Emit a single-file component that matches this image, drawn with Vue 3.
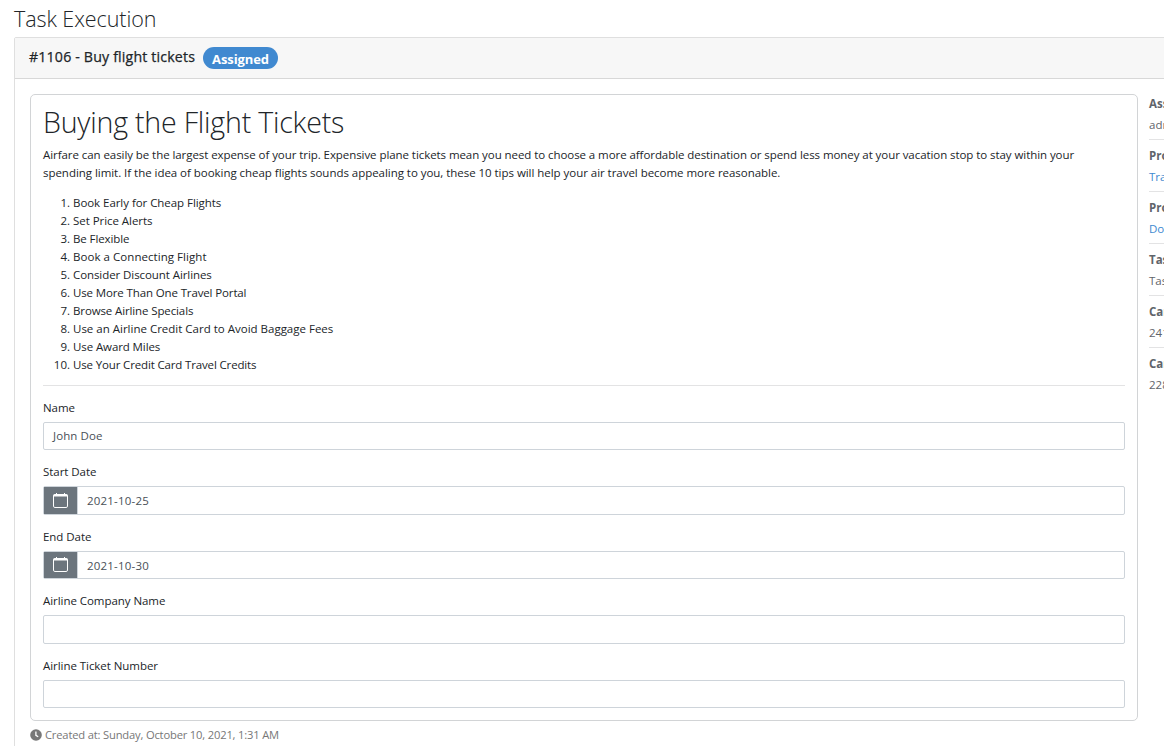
<script setup>
const tips = [
  { text: 'Book Early for Cheap Flights', spacing: -0.05 },
  { text: 'Set Price Alerts', spacing: -0.05 },
  { text: 'Be Flexible', spacing: -0.1 },
  { text: 'Book a Connecting Flight', spacing: 0.05 },
  { text: 'Consider Discount Airlines', spacing: -0.08 },
  { text: 'Use More Than One Travel Portal', spacing: -0.13 },
  { text: 'Browse Airline Specials', spacing: -0.12 },
  { text: 'Use an Airline Credit Card to Avoid Baggage Fees', spacing: 0 },
  { text: 'Use Award Miles', spacing: -0.1 },
  { text: 'Use Your Credit Card Travel Credits', spacing: -0.15 },
]
const fields = [
  { label: 'Name', value: 'John Doe' },
  { label: 'Start Date', value: '2021-10-25', date: true },
  { label: 'End Date', value: '2021-10-30', date: true },
  { label: 'Airline Company Name', value: '' },
  { label: 'Airline Ticket Number', value: '' },
]
const details = [
  { name: 'Assigned', value: 'admin' },
  { name: 'Process', value: 'Travel', link: true },
  { name: 'Process', value: 'Document', link: true },
  { name: 'Task', value: 'Task' },
  { name: 'Camunda', value: '241' },
  { name: 'Camunda', value: '228' },
]
</script>

<template>
  <main class="page">
    <h1 class="page-title">Task Execution</h1>
    <section class="card">
      <header class="card-header">
        <span class="task-name">#1106 - Buy flight tickets</span>
        <span class="badge">Assigned</span>
      </header>
      <div class="card-body">
        <div class="main">
          <div class="panel">
            <h2 class="panel-title">Buying the Flight Tickets</h2>
            <p class="intro">
              <span class="line">Airfare can easily be the largest expense of your trip. Expensive plane tickets mean you need to choose a more affordable destination or spend less money at your vacation stop to stay within your</span>
              <span class="line second">spending limit. If the idea of booking cheap flights sounds appealing to you, these 10 tips will help your air travel become more reasonable.</span>
            </p>
            <ol class="tips">
              <li v-for="(tip, i) in tips" :key="tip.text">
                <span class="num">{{ i + 1 }}.</span>
                <span :style="{ letterSpacing: tip.spacing + 'px' }">{{ tip.text }}</span>
              </li>
            </ol>
            <hr class="rule" />
            <div v-for="f in fields" :key="f.label" class="field">
              <div class="label">{{ f.label }}</div>
              <div class="control">
                <span v-if="f.date" class="addon">
                  <svg width="17" height="17" viewBox="0 0 17 17" fill="none" stroke="#fff">
                    <rect x="1.5" y="2.5" width="14" height="13" rx="1.4" stroke-width="1" />
                    <path d="M1.5 3.5h14" stroke-width="2" />
                    <path d="M4.5 1v2M12.5 1v2" stroke-width="1" />
                  </svg>
                </span>
                <span class="value" :class="{ dated: f.date }">{{ f.value }}</span>
              </div>
            </div>
          </div>
          <div class="created">
            <svg width="12" height="12" viewBox="0 0 12 12">
              <circle cx="6" cy="6" r="5.8" fill="#777" />
              <path d="M5.9 2.6v3.7l2.3 1.5" fill="none" stroke="#fff" stroke-width="1.3" />
            </svg>
            <span>Created at: Sunday, October 10, 2021, 1:31 AM</span>
          </div>
        </div>
        <aside class="side">
          <div v-for="(d, i) in details" :key="i" class="detail">
            <div class="name">{{ d.name }}</div>
            <div :class="{ link: d.link }">{{ d.value }}</div>
          </div>
        </aside>
      </div>
    </section>
  </main>
</template>

<style>
html, body { margin: 0; background: #fff; overflow: hidden; }
</style>

<style scoped>
* { box-sizing: border-box; }
.page {
  width: 1164px;
  height: 746px;
  padding: 5px 0 0 14px;
  overflow: hidden;
  font: 400 11.5px/18px "Open Sans", "Noto Sans", sans-serif;
  color: #212529;
  white-space: nowrap;
}
.page-title { margin: 0; height: 32px; font-size: 21.5px; line-height: 27px; font-weight: 300; letter-spacing: -0.06px; }
.card { width: 1240px; height: 760px; border: 1px solid #dfdfdf; border-top-left-radius: 2px; }
.card-header {
  display: flex;
  height: 41px;
  padding: 9px 15px 0 14px;
  background: #f7f7f7;
  border-bottom: 1px solid #d8d8d8;
}
.task-name { width: 174px; font-size: 14.2px; line-height: 20px; font-weight: 500; letter-spacing: 0.16px; -webkit-text-stroke: 0.25px #212529; }
.badge {
  width: 75px;
  height: 22px;
  border-radius: 11px;
  background: #4089d0;
  color: #fff;
  font-size: 13px;
  line-height: 25px;
  font-weight: 700;
  letter-spacing: -0.1px;
  text-align: center;
}
.card-body { display: flex; gap: 11px; padding: 15px 0 0 15px; }
.main { width: 1108px; flex: none; }
.panel { height: 627px; padding: 8px 12px 0; border: 1px solid #d2d4d6; border-radius: 5px; }
.panel-title { margin: 0 0 5px; font-size: 28.6px; line-height: 38px; font-weight: 300; letter-spacing: -0.22px; }
.intro { margin: 0 0 12px; }
.line { display: block; letter-spacing: -0.067px; }
.line.second { letter-spacing: -0.037px; }
.tips { list-style: none; margin: 0; padding: 0; }
.tips li { display: flex; gap: 3px; }
.num { width: 27px; text-align: right; }
.rule { margin: 11px 0 13.2px; border: 0; border-top: 1px solid #e3e3e4; }
.field { height: 64.5px; }
.label { height: 22.5px; letter-spacing: -0.05px; position: relative; top: -0.25px; }
.control {
  display: flex;
  align-items: center;
  height: 28.5px;
  border: 1px solid #ced4da;
  border-radius: 2px;
  color: #495057;
}
.value { padding: 1px 0 0 9px; letter-spacing: 0.1px; }
.value.dated { padding-top: 2px; letter-spacing: 0.2px; }
.addon {
  display: flex;
  align-items: center;
  justify-content: center;
  align-self: stretch;
  width: 34px;
  padding-right: 1px;
  background: #6c757d;
  border-right: 1px solid #ced4da;
}
.created { display: flex; align-items: center; gap: 3px; height: 28px; color: #777; font-size: 11.2px; letter-spacing: -0.18px; }
.side { width: 115px; padding-top: 1px; color: #5f646a; }
.detail { height: 52px; line-height: 21px; padding-top: 5px; border-top: 1px solid #e3e3e4; }
.detail:first-child { border-color: transparent; height: 47px; padding-top: 0; margin-top: -3px; }
.name { font-weight: 700; }
.link { color: #4089d0; }
</style>
